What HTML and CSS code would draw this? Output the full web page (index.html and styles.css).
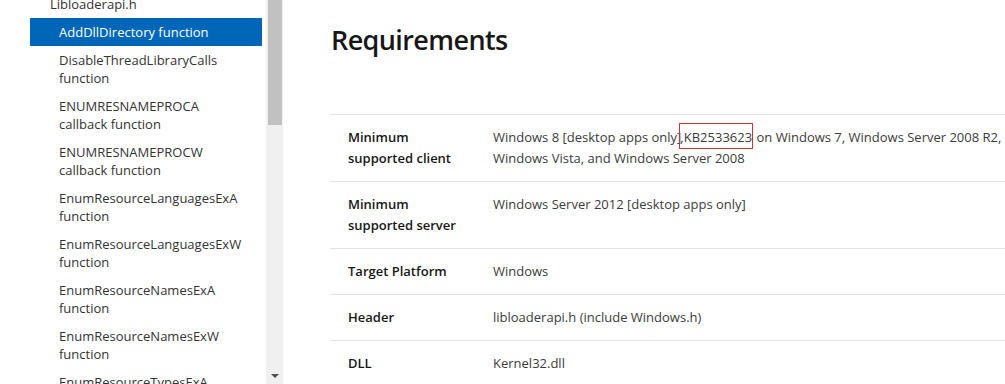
FILE: index.html
```html
<!DOCTYPE html>
<html lang="en">
<head>
<meta charset="utf-8">
<title>AddDllDirectory function - Requirements</title>
<link rel="stylesheet" href="styles.css">
</head>
<body>
<div class="page">
  <aside class="sidebar">
    <nav class="toc">
      <ul class="tree">
        <li class="parent">Libloaderapi.h</li>
        <li class="item selected">AddDllDirectory function</li>
        <li class="item">DisableThreadLibraryCalls<br>function</li>
        <li class="item">ENUMRESNAMEPROCA<br>callback function</li>
        <li class="item">ENUMRESNAMEPROCW<br>callback function</li>
        <li class="item">EnumResourceLanguagesExA<br>function</li>
        <li class="item">EnumResourceLanguagesExW<br>function</li>
        <li class="item">EnumResourceNamesExA<br>function</li>
        <li class="item">EnumResourceNamesExW<br>function</li>
        <li class="item">EnumResourceTypesExA<br>function</li>
      </ul>
    </nav>
    <div class="scrollbar">
      <div class="thumb"></div>
      <div class="track-space"></div>
      <div class="arrow-down"></div>
    </div>
  </aside>
  <main class="content">
    <h2 class="heading">Requirements</h2>
    <table class="req">
      <tbody>
        <tr>
          <th class="label">Minimum supported client</th>
          <td class="value">Windows 8 [desktop apps only]<span class="mark">,KB2533623</span> on Windows 7, Windows Server 2008 R2, Windows Vista, and Windows Server 2008</td>
        </tr>
        <tr>
          <th class="label">Minimum supported server</th>
          <td class="value">Windows Server 2012 [desktop apps only]</td>
        </tr>
        <tr>
          <th class="label">Target Platform</th>
          <td class="value">Windows</td>
        </tr>
        <tr>
          <th class="label">Header</th>
          <td class="value">libloaderapi.h (include Windows.h)</td>
        </tr>
        <tr>
          <th class="label">DLL</th>
          <td class="value">Kernel32.dll</td>
        </tr>
      </tbody>
    </table>
  </main>
</div>
</body>
</html>
```

FILE: styles.css
```css
html, body {
  margin: 0;
  padding: 0;
  background: #ffffff;
}

body {
  font-family: "Open Sans", "Noto Sans", "Liberation Sans", sans-serif;
  color: #333333;
  height: 384px;
  overflow: hidden;
}

.page {
  display: flex;
  height: 384px;
}

.sidebar {
  display: flex;
  flex: 0 0 283px;
  height: 384px;
}

.toc {
  flex: 0 0 266px;
  overflow: hidden;
}

.tree {
  list-style: none;
  margin: -10px 0 0 0;
  padding: 0;
  font-size: 13px;
  line-height: 18px;
  color: #333333;
}

.parent {
  padding: 5px 0 5px 50px;
}

.item {
  margin-left: 30px;
  width: 203px;
  padding: 5px 0 5px 29px;
}

.item.selected {
  background: #0067b8;
  color: #ffffff;
}

.scrollbar {
  flex: 0 0 17px;
  display: flex;
  flex-direction: column;
  align-items: center;
  background: #f0f0f0;
}

.thumb {
  width: 14px;
  height: 125px;
  margin-left: 1px;
  background: #c1c1c1;
}

.track-space {
  flex: 1;
}

.arrow-down {
  width: 0;
  height: 0;
  border-left: 4px solid transparent;
  border-right: 4px solid transparent;
  border-top: 4px solid #505050;
  margin-bottom: 6px;
}

.content {
  flex: 1;
  min-width: 0;
  overflow: hidden;
  padding-left: 47px;
}

.heading {
  margin: 22px 0 56px 1px;
  font-size: 27px;
  line-height: 36px;
  font-weight: 600;
  letter-spacing: -0.6px;
  color: #171717;
}

.req {
  border-collapse: collapse;
  width: 700px;
  font-size: 13px;
  line-height: 21px;
}

.req tr {
  border-top: 1px solid #e3e3e3;
  border-bottom: 1px solid #e3e3e3;
}

.label {
  width: 121px;
  padding: 12px 12px 12px 18px;
  text-align: left;
  vertical-align: top;
  font-weight: 600;
  color: #171717;
}

.value {
  padding: 12px 12px 12px 12px;
  vertical-align: top;
  color: #3b3b3b;
}

.mark {
  border: 1px solid #c9363a;
  padding: 4px 0 2px 0;
  margin-left: -2px;
}
```
